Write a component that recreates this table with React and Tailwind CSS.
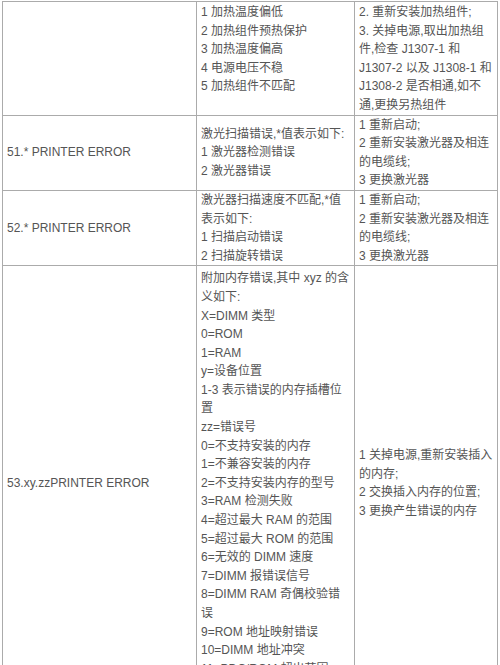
import React from 'react'

const rows = [
  {
    code: '',
    cause: ['1 加热温度偏低', '2 加热组件预热保护', '3 加热温度偏高', '4 电源电压不稳', '5 加热组件不匹配'],
    fix: [
      '2. 重新安装加热组件;',
      '3. 关掉电源,取出加热组',
      '件,检查 J1307-1 和',
      'J1307-2 以及 J1308-1 和',
      'J1308-2 是否相通,如不',
      '通,更换另热组件',
    ],
    pad: 'align-top pt-px pb-0',
  },
  {
    code: '51.* PRINTER ERROR',
    cause: ['激光扫描错误,*值表示如下:', '1 激光器检测错误', '2 激光器错误'],
    fix: ['1 重新启动;', '2 重新安装激光器及相连', '的电缆线;', '3 更换激光器'],
    pad: 'align-middle py-0',
  },
  {
    code: '52.* PRINTER ERROR',
    cause: ['激光器扫描速度不匹配,*值', '表示如下:', '1 扫描启动错误', '2 扫描旋转错误'],
    fix: ['1 重新启动;', '2 重新安装激光器及相连', '的电缆线;', '3 更换激光器'],
    pad: 'align-middle py-0',
  },
  {
    code: '53.xy.zzPRINTER ERROR',
    cause: [
      '附加内存错误,其中 xyz 的含',
      '义如下:',
      'X=DIMM 类型',
      '0=ROM',
      '1=RAM',
      'y=设备位置',
      '1-3 表示错误的内存插槽位',
      '置',
      'zz=错误号',
      '0=不支持安装的内存',
      '1=不兼容安装的内存',
      '2=不支持安装内存的型号',
      '3=RAM 检测失败',
      '4=超过最大 RAM 的范围',
      '5=超过最大 ROM 的范围',
      '6=无效的 DIMM 速度',
      '7=DIMM 报错误信号',
      '8=DIMM RAM 奇偶校验错',
      '误',
      '9=ROM 地址映射错误',
      '10=DIMM 地址冲突',
      '11=PDC/ROM 超出范围',
      '12=无法确定 DIMM 类型',
    ],
    fix: ['1 关掉电源,重新安装插入', '的内存;', '2 交换插入内存的位置;', '3 更换产生错误的内存'],
    pad: 'align-middle py-[3px]',
  },
]

function Lines({ items }) {
  return (
    <div>
      {items.map((t, i) => (
        <div key={i} className="whitespace-nowrap">
          {t}
        </div>
      ))}
    </div>
  )
}

export default function App() {
  return (
    <div className="w-[500px] h-[665px] overflow-hidden bg-white pt-px pl-[2px]">
      <table
        className="table-fixed border-collapse text-[12px] leading-[18.6px] text-[#555555]"
        style={{ fontFamily: '"Liberation Sans", "Noto Sans CJK SC", sans-serif' }}
      >
        <colgroup>
          <col className="w-[194px]" />
          <col className="w-[158px]" />
          <col className="w-[143px]" />
        </colgroup>
        <tbody>
          {rows.map((r, i) => (
            <tr key={i}>
              <td className="border border-[#ababab] px-1 py-0 align-middle whitespace-nowrap">{r.code}</td>
              <td className={`border border-[#ababab] px-1 ${r.pad}`}>
                <Lines items={r.cause} />
              </td>
              <td className={`border border-[#ababab] px-1 ${r.pad}`}>
                <Lines items={r.fix} />
              </td>
            </tr>
          ))}
        </tbody>
      </table>
    </div>
  )
}
